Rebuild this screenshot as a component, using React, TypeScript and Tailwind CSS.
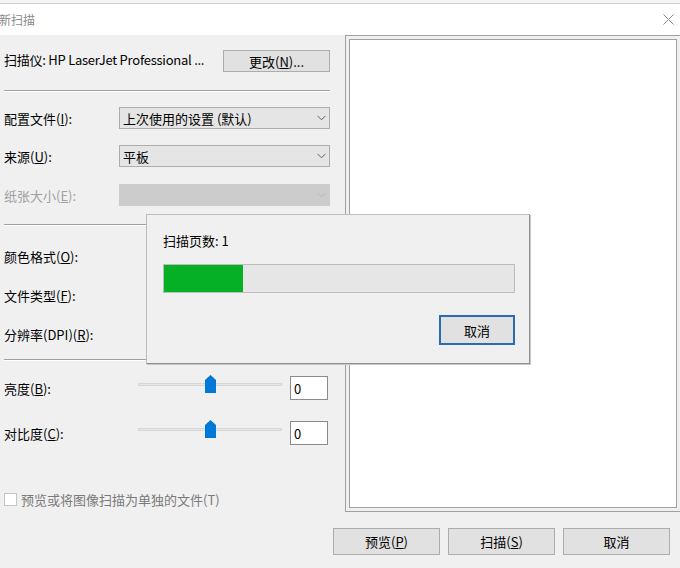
import React from "react";

const font = { fontFamily: '"Noto Sans CJK SC", "Noto Sans", sans-serif' };

function Chevron({ disabled }: { disabled?: boolean }) {
  return (
    <svg width="9" height="6" viewBox="0 0 9 6" className="mr-[3px]">
      <path d="M0.5 0.8 L4.5 4.8 L8.5 0.8" fill="none" stroke={disabled ? "#b8b8b8" : "#606060"} strokeWidth="1" />
    </svg>
  );
}

function Select({ value, disabled }: { value?: string; disabled?: boolean }) {
  return (
    <div
      className={
        "flex h-[22px] w-[211px] items-center justify-between border pl-[3px] " +
        (disabled ? "border-[#cccccc] bg-[#cccccc]" : "border-[#adadad] bg-[#e5e5e5]")
      }
    >
      <span className="text-[13px] leading-none text-black">{value}</span>
      <Chevron disabled={disabled} />
    </div>
  );
}

function Label({ children, disabled }: { children: React.ReactNode; disabled?: boolean }) {
  return (
    <span className={"w-[115px] shrink-0 text-[13px] leading-none " + (disabled ? "text-[#a0a0a0]" : "text-black")}>
      {children}
    </span>
  );
}

function Sep() {
  return <div className="h-[2px] w-[326px] border-t border-b border-t-[#a0a0a0] border-b-white" />;
}

function Slider() {
  return (
    <div className="relative ml-[19px] h-[24px] w-[144px]">
      <div className="absolute left-0 top-[7px] h-[3px] w-[144px] border border-[#d6d6d6] bg-[#e7e7e7]" />
      <svg width="11" height="18" viewBox="0 0 11 18" className="absolute left-[67px] top-[-1px]">
        <path d="M5.5 0 L11 5 L11 18 L0 18 L0 5 Z" fill="#0078d7" />
      </svg>
    </div>
  );
}

function Num() {
  return (
    <div className="ml-[8px] flex h-[24px] w-[38px] items-center border border-[#8a8a8a] bg-white pl-[3px] text-[13px] leading-none text-black">
      0
    </div>
  );
}

function Btn({ children, w, className = "" }: { children: React.ReactNode; w: string; className?: string }) {
  return (
    <div
      className={
        "flex items-center justify-center border border-[#adadad] bg-[#e1e1e1] text-[13px] leading-none text-black " +
        w +
        " " +
        className
      }
    >
      {children}
    </div>
  );
}

export default function App() {
  return (
    <div className="relative h-[568px] w-[680px] overflow-hidden bg-[#f0f0f0]" style={font}>
      {/* top strip */}
      <div className="h-[3px] bg-[#f4f4f4]" />
      <div className="h-px bg-[#cfcfcf]" />
      {/* title bar */}
      <div className="flex h-[31px] items-center justify-between bg-white">
        <span className="ml-[-1px] text-[12px] leading-none text-[#8a8a8a]">新扫描</span>
        <svg width="11" height="11" viewBox="0 0 11 11" className="mr-[6px]">
          <path d="M0.5 0.5 L10.5 10.5 M10.5 0.5 L0.5 10.5" stroke="#8a8a8a" strokeWidth="1" />
        </svg>
      </div>

      {/* body */}
      <div className="flex h-[477px]">
        {/* left panel */}
        <div className="flex w-[330px] shrink-0 flex-col pl-[4px]">
          <div className="mt-[15px] flex h-[22px] items-center justify-between">
            <span className="mt-[-3px] text-[13px] leading-none tracking-[-0.25px] text-black">
              扫描仪: HP LaserJet Professional ...
            </span>
            <Btn w="w-[107px] h-[22px]">
              更改(<u>N</u>)...
            </Btn>
          </div>
          <div className="mt-[18px]">
            <Sep />
          </div>
          <div className="mt-[15px] flex h-[22px] items-center">
            <Label>
              配置文件(<u>I</u>):
            </Label>
            <Select value="上次使用的设置 (默认)" />
          </div>
          <div className="mt-[16px] flex h-[22px] items-center">
            <Label>
              来源(<u>U</u>):
            </Label>
            <Select value="平板" />
          </div>
          <div className="mt-[17px] flex h-[22px] items-center">
            <Label disabled>
              纸张大小(<u>E</u>):
            </Label>
            <Select disabled />
          </div>
          <div className="mt-[18px]">
            <Sep />
          </div>
          <div className="mt-[19px] flex h-[22px] items-center">
            <Label>
              颜色格式(<u>O</u>):
            </Label>
          </div>
          <div className="mt-[17px] flex h-[22px] items-center">
            <Label>
              文件类型(<u>F</u>):
            </Label>
          </div>
          <div className="mt-[17px] flex h-[22px] items-center">
            <Label>
              分辨率(DPI)(<u>R</u>):
            </Label>
          </div>
          <div className="mt-[14px]">
            <Sep />
          </div>
          <div className="mt-[15px] flex h-[24px] items-center">
            <Label>
              亮度(<u>B</u>):
            </Label>
            <Slider />
            <Num />
          </div>
          <div className="mt-[21px] flex h-[24px] items-center">
            <Label>
              对比度(<u>C</u>):
            </Label>
            <Slider />
            <Num />
          </div>
          <div className="mt-[48px] flex h-[13px] items-center">
            <div className="h-[13px] w-[13px] border border-[#c4c4c4] bg-white" />
            <span className="ml-[4px] text-[13px] leading-none text-[#7a7a7a]">预览或将图像扫描为单独的文件(T)</span>
          </div>
        </div>

        {/* preview */}
        <div className="ml-[15px] flex w-[340px] shrink-0 border-t border-b border-l border-[#a0a0a0] pt-[3px] pb-[3px] pl-[3px]">
          <div className="h-full w-[328px] border border-[#a0a0a0] bg-white" />
        </div>
      </div>

      {/* bottom buttons */}
      <div className="mt-[16px] flex pl-[333px]">
        <Btn w="w-[107px] h-[27px]">
          预览(<u>P</u>)
        </Btn>
        <Btn w="w-[107px] h-[27px]" className="ml-[8px]">
          扫描(<u>S</u>)
        </Btn>
        <Btn w="w-[107px] h-[27px]" className="ml-[8px]">
          取消
        </Btn>
      </div>

      {/* progress dialog */}
      <div className="absolute left-[146px] top-[214px] flex h-[150px] w-[384px] flex-col border border-[#bdbdbd] border-r-[#8f8f8f] border-b-[#8f8f8f] bg-[#f0f0f0] pl-[16px] shadow-[1px_1px_0_#c8c8c8]">
        <span className="mt-[19px] text-[13px] leading-none text-black">扫描页数: 1</span>
        <div className="mt-[17px] flex h-[29px] w-[352px] border border-[#bcbcbc] bg-[#e6e6e6]">
          <div className="h-full w-[79px] bg-[#06b025]" />
        </div>
        <div className="mt-[22px] flex w-[352px] justify-end">
          <div className="flex h-[30px] w-[76px] items-center justify-center border-2 border-[#2b6cb0] bg-[#e1e1e1] text-[13px] leading-none text-black">
            取消
          </div>
        </div>
      </div>
    </div>
  );
}
